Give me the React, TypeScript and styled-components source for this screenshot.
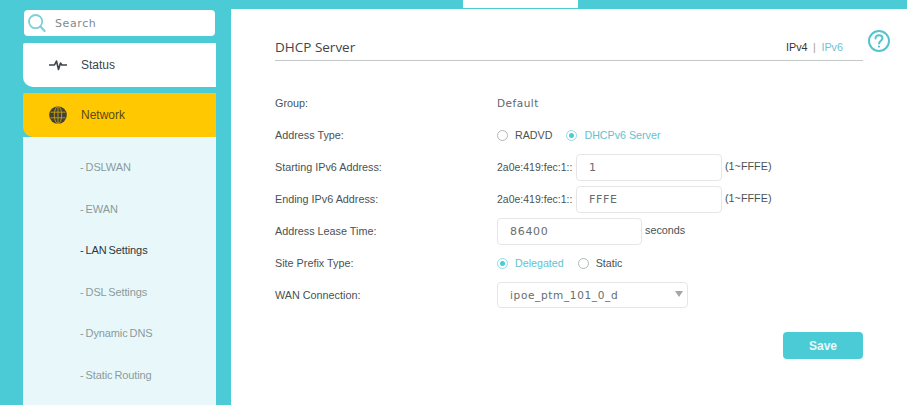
import React from "react";
import styled, { createGlobalStyle } from "styled-components";

const GlobalStyle = createGlobalStyle`
  html, body {
    margin: 0;
    padding: 0;
    height: 100%;
    overflow: hidden;
    background: #4acbd6;
    font-family: "Liberation Sans", Arial, sans-serif;
  }
`;

const Page = styled.div`
  width: 907px;
  height: 405px;
  display: flex;
  background: #4acbd6;
  overflow: hidden;
`;

const Sidebar = styled.aside`
  width: 231px;
  flex: none;
  padding: 10px 15px 0 23px;
  box-sizing: border-box;
  display: flex;
  flex-direction: column;
`;

const SearchBox = styled.div`
  width: 191px;
  height: 26px;
  margin-left: 1px;
  margin-bottom: 7px;
  background: #fff;
  border-radius: 4px;
  display: flex;
  align-items: center;
  padding-left: 3px;
  box-sizing: border-box;
  color: #7f8a8c;
  font-family: "DejaVu Sans", sans-serif;
  font-size: 11px;
  letter-spacing: 0.6px;

  svg {
    margin-right: 8px;
  }
`;

const MenuItem = styled.div<{ $active?: boolean }>`
  width: 193px;
  height: 44px;
  flex: none;
  margin-bottom: ${(p) => (p.$active ? 0 : "6px")};
  background: ${(p) => (p.$active ? "#ffc800" : "#fff")};
  color: ${(p) => (p.$active ? "#5b4a12" : "#3c4447")};
  border-bottom-left-radius: 10px;
  border-top-left-radius: 2px;
  display: flex;
  align-items: center;
  padding-left: 26px;
  box-sizing: border-box;
  font-size: 12px;
`;

const MenuIcon = styled.span`
  width: 18px;
  height: 18px;
  margin-right: 14px;
  display: flex;
  align-items: center;
  justify-content: center;
`;

const SubMenu = styled.ul`
  width: 193px;
  flex: 1;
  margin: 0;
  padding: 10px 0 0 57px;
  box-sizing: border-box;
  list-style: none;
  background: #e8f8fa;
`;

const SubItem = styled.li<{ $active?: boolean }>`
  height: 41.6px;
  line-height: 41.6px;
  font-size: 11px;
  word-spacing: -1px;
  letter-spacing: -0.1px;
  color: ${(p) => (p.$active ? "#2f3639" : "#8b9a9d")};
`;

const Column = styled.div`
  flex: 1;
  display: flex;
  flex-direction: column;
  min-width: 0;
`;

const TopBar = styled.div`
  height: 9px;
  flex: none;
  padding-left: 232px;
`;

const TopTab = styled.div`
  width: 115px;
  height: 8px;
  background: #fff;
`;

const Main = styled.main`
  flex: 1;
  background: #fff;
  padding: 26px 44px 0;
  position: relative;
`;

const Header = styled.header`
  height: 24px;
  display: flex;
  justify-content: space-between;
  align-items: center;
  border-bottom: 1px solid #c4c7c8;
  padding-bottom: 1px;
`;

const Title = styled.h1`
  margin: 0;
  font-family: "Open Sans", sans-serif;
  font-weight: 400;
  font-size: 13.5px;
  color: #3f4648;
`;

const Versions = styled.div`
  font-size: 10.8px;
  color: #2f3639;
  padding-right: 20px;
  display: flex;
  gap: 5.5px;
`;

const Divider = styled.span`
  color: #a9a48f;
`;

const VersionLink = styled.span`
  color: #6cc3d0;
`;

const HelpButton = styled.div`
  position: absolute;
  top: 20px;
  right: 16px;
  width: 24px;
  height: 24px;
`;

const Form = styled.div`
  margin-top: 26px;
`;

const Row = styled.div`
  height: 32px;
  display: flex;
  align-items: center;
`;

const Label = styled.div`
  width: 222px;
  flex: none;
  font-size: 10.8px;
  color: #4a5254;
`;

const PlainValue = styled.div`
  font-family: "DejaVu Sans", sans-serif;
  font-size: 10.5px;
  letter-spacing: 0.5px;
  color: #5f6668;
`;

const RadioLabel = styled.label<{ $on?: boolean }>`
  display: flex;
  align-items: center;
  font-size: 10.7px;
  color: ${(p) => (p.$on ? "#62c2cf" : "#4a5254")};
  margin-right: 14px;
`;

const RadioMark = styled.span<{ $on?: boolean }>`
  width: 11px;
  height: 11px;
  border-radius: 50%;
  border: 1px solid ${(p) => (p.$on ? "#8fdbe2" : "#b4b8b9")};
  box-sizing: border-box;
  margin-right: 7px;
  display: flex;
  align-items: center;
  justify-content: center;

  &::after {
    content: "";
    width: 5px;
    height: 5px;
    border-radius: 50%;
    background: ${(p) => (p.$on ? "#4acbd6" : "transparent")};
  }
`;

const Prefix = styled.span`
  font-size: 10.5px;
  color: #4a5254;
  width: 79px;
  flex: none;
`;

const Field = styled.div<{ $width: number }>`
  width: ${(p) => p.$width}px;
  height: 27px;
  border: 1px solid #e4e6e7;
  border-radius: 4px;
  box-sizing: border-box;
  padding-left: 12px;
  display: flex;
  align-items: center;
  position: relative;
  font-family: "DejaVu Sans", sans-serif;
  font-size: 11px;
  letter-spacing: 0.7px;
  color: #666d6f;
  flex: none;
`;

const SelectField = styled(Field)`
  height: 26px;
  font-size: 10.5px;
  letter-spacing: 0.65px;
`;

const Hint = styled.span`
  font-size: 10.8px;
  color: #4a5254;
  margin-left: 3px;
  position: relative;
  top: -1px;
`;

const Caret = styled.span`
  position: absolute;
  right: 4px;
  top: 8px;
  width: 0;
  height: 0;
  border-left: 4.5px solid transparent;
  border-right: 4.5px solid transparent;
  border-top: 6px solid #a3a7a8;
`;

const Actions = styled.div`
  display: flex;
  justify-content: flex-end;
  margin-top: 21px;
`;

const SaveButton = styled.button`
  width: 80px;
  height: 27px;
  border: 0;
  border-radius: 4px;
  background: #4acbd6;
  color: #eafafb;
  font-family: "Liberation Sans", Arial, sans-serif;
  font-size: 12px;
  font-weight: 700;
  padding: 0;
`;

const subItems = ["DSLWAN", "EWAN", "LAN Settings", "DSL Settings", "Dynamic DNS", "Static Routing"];

function Radio({ on, children }: { on?: boolean; children: React.ReactNode }) {
  return (
    <RadioLabel $on={on}>
      <RadioMark $on={on} />
      {children}
    </RadioLabel>
  );
}

export default function App() {
  return (
    <Page>
      <GlobalStyle />
      <Sidebar>
        <SearchBox>
          <svg width="20" height="20" viewBox="0 0 20 20" fill="none" stroke="#7fcfd6">
            <circle cx="8.6" cy="8.6" r="6.6" strokeWidth="1.8" />
            <path d="M13.4 13.6 L17.6 18" strokeWidth="2.2" strokeLinecap="round" />
          </svg>
          Search
        </SearchBox>
        <MenuItem>
          <MenuIcon>
            <svg width="18" height="12" viewBox="0 0 18 12" fill="none" stroke="#3c4447" strokeWidth="1.6">
              <path d="M0 6 H5.5 L7.5 2 L9.5 10.5 L11.5 4 L12.8 6 H18" strokeLinejoin="round" />
            </svg>
          </MenuIcon>
          Status
        </MenuItem>
        <MenuItem $active>
          <MenuIcon>
            <svg width="18" height="18" viewBox="0 0 18 18" fill="none">
              <circle cx="9" cy="9" r="8.8" fill="#41403a" />
              <g stroke="#c9a00a" strokeWidth="0.9">
                <ellipse cx="9" cy="9" rx="3.7" ry="8.6" />
                <path d="M9 0.5 V17.5 M1.5 6.2 H16.5 M1.5 11.8 H16.5" />
              </g>
            </svg>
          </MenuIcon>
          Network
        </MenuItem>
        <SubMenu>
          {subItems.map((item) => (
            <SubItem key={item} $active={item === "LAN Settings"}>
              - {item}
            </SubItem>
          ))}
        </SubMenu>
      </Sidebar>
      <Column>
        <TopBar>
          <TopTab />
        </TopBar>
        <Main>
          <Header>
            <Title>DHCP Server</Title>
            <Versions>
              IPv4 <Divider>|</Divider> <VersionLink>IPv6</VersionLink>
            </Versions>
          </Header>
          <HelpButton>
            <svg width="24" height="24" viewBox="0 0 24 24" fill="none" stroke="#56c3cd" strokeWidth="2">
              <circle cx="12" cy="12" r="10" />
              <path d="M8.5 9.5 C8.5 7.4 10 6.2 12 6.2 C14 6.2 15.5 7.5 15.5 9.2 C15.5 11.6 12 11.8 12 14.6" strokeLinecap="round" />
              <circle cx="12" cy="17.6" r="1.1" fill="#56c3cd" stroke="none" />
            </svg>
          </HelpButton>
          <Form>
            <Row>
              <Label>Group:</Label>
              <PlainValue>Default</PlainValue>
            </Row>
            <Row>
              <Label>Address Type:</Label>
              <Radio>RADVD</Radio>
              <Radio on>DHCPv6 Server</Radio>
            </Row>
            <Row>
              <Label>Starting IPv6 Address:</Label>
              <Prefix>2a0e:419:fec:1::</Prefix>
              <Field $width={146}>1</Field>
              <Hint>(1~FFFE)</Hint>
            </Row>
            <Row>
              <Label>Ending IPv6 Address:</Label>
              <Prefix>2a0e:419:fec:1::</Prefix>
              <Field $width={146}>FFFE</Field>
              <Hint>(1~FFFE)</Hint>
            </Row>
            <Row>
              <Label>Address Lease Time:</Label>
              <Field $width={145}>86400</Field>
              <Hint>seconds</Hint>
            </Row>
            <Row>
              <Label>Site Prefix Type:</Label>
              <Radio on>Delegated</Radio>
              <Radio>Static</Radio>
            </Row>
            <Row>
              <Label>WAN Connection:</Label>
              <SelectField $width={191}>
                ipoe_ptm_101_0_d
                <Caret />
              </SelectField>
            </Row>
          </Form>
          <Actions>
            <SaveButton>Save</SaveButton>
          </Actions>
        </Main>
      </Column>
    </Page>
  );
}
